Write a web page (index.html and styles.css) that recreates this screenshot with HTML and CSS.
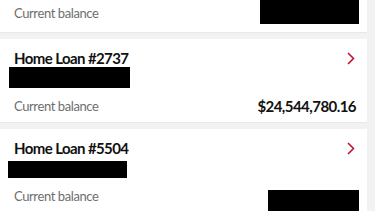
FILE: index.html
```html
<!DOCTYPE html>
<html>
<head>
<meta charset="utf-8">
<link rel="stylesheet" href="styles.css">
</head>
<body>
<div class="list">
  <div class="card card-top">
    <div class="bal">
      <span class="label">Current balance</span>
      <div class="redact ramt"></div>
    </div>
  </div>
  <div class="card">
    <div class="head">
      <span class="title">Home Loan #2737</span>
      <svg class="chev" width="8" height="13" viewBox="0 0 8 13"><path d="M1 1 L6.5 6.5 L1 12" fill="none" stroke="#c8102e" stroke-width="1.6"/></svg>
    </div>
    <div class="redact r1"></div>
    <div class="bal">
      <span class="label">Current balance</span>
      <span class="amt">$24,544,780.16</span>
    </div>
  </div>
  <div class="card">
    <div class="head">
      <span class="title">Home Loan #5504</span>
      <svg class="chev" width="8" height="13" viewBox="0 0 8 13"><path d="M1 1 L6.5 6.5 L1 12" fill="none" stroke="#c8102e" stroke-width="1.6"/></svg>
    </div>
    <div class="redact r2"></div>
    <div class="bal">
      <span class="label">Current balance</span>
      <div class="redact ramt2"></div>
    </div>
  </div>
</div>
</body>
</html>
```
FILE: styles.css
```css
html, body {
  margin: 0;
  padding: 0;
  background: #f2f2f2;
  font-family: "Lato", "Liberation Sans", sans-serif;
  overflow: hidden;
}
.list {
  display: flex;
  flex-direction: column;
  gap: 7px;
  padding-right: 8px;
}
.card {
  background: #fff;
  padding: 10px 10px 6px 14px;
  box-shadow: 0 1px 1px rgba(0,0,0,0.04);
}
.card-top {
  padding-top: 0;
}
.card-top .bal {
  margin-top: 0;
  height: 26px;
  align-items: flex-start;
}
.head {
  display: flex;
  justify-content: space-between;
  align-items: center;
  height: 18px;
}
.title {
  font-weight: 700;
  font-size: 15px;
  letter-spacing: -0.6px;
  color: #111;
}
.chev {
  margin-right: 2px;
}
.redact {
  background: #000;
}
.r1 {
  width: 121px;
  height: 21px;
  margin-left: -5px;
}
.r2 {
  width: 119px;
  height: 17px;
  margin-left: -6px;
  margin-top: 4px;
}
.bal {
  display: flex;
  justify-content: space-between;
  align-items: center;
  height: 20px;
  margin-top: 8px;
}
.label {
  font-size: 13px;
  letter-spacing: -0.4px;
  color: #6e6e6e;
}
.card-top .label {
  margin-top: 5px;
}
.amt {
  font-weight: 700;
  font-size: 15px;
  letter-spacing: -0.55px;
  color: #111;
  margin-right: 1px;
}
.ramt {
  width: 99px;
  height: 24px;
  margin-right: -2px;
}
.ramt2 {
  width: 91px;
  height: 21px;
  margin-right: -2px;
  margin-top: 8px;
}
```
